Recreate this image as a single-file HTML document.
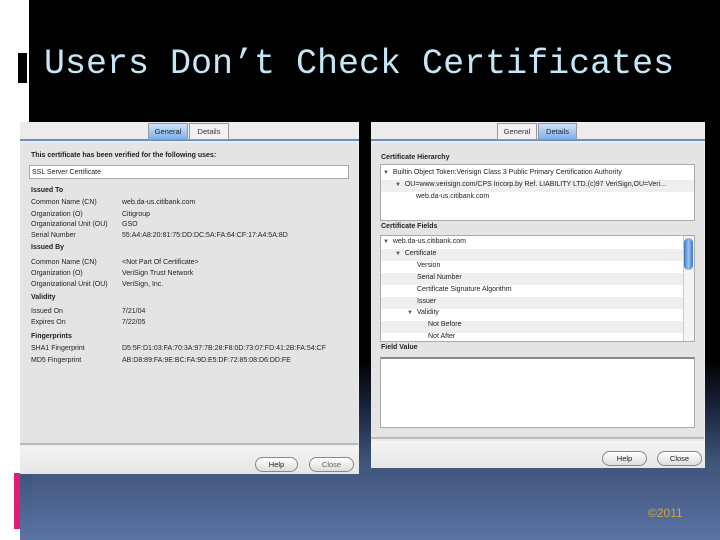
<!DOCTYPE html>
<html><head><meta charset="utf-8"><style>
*{margin:0;padding:0;box-sizing:border-box}
body{width:720px;height:540px;overflow:hidden;position:relative;background:#fff;font-family:"Liberation Sans",sans-serif}
.bg{position:absolute;left:29px;top:0;width:691px;height:540px;background:linear-gradient(to bottom,#000 0,#000 360px,#1a2640 410px,#3d5378 460px,#5a73a5 540px)}
.bg2{position:absolute;left:20px;top:470px;width:12px;height:70px;background:linear-gradient(to bottom,#3d5378,#5a73a5)}
.title{position:absolute;left:44px;top:44px;font-family:"Liberation Mono",monospace;font-size:35px;color:#c6e6f5;white-space:nowrap}
.mark{position:absolute;left:17px;top:52px;width:11px;height:32px;background:#000;border:1px solid #fff}
.pink{position:absolute;left:14px;top:473px;width:6px;height:56px;background:#e01c7a}
.copy{position:absolute;left:648px;top:506px;font-size:12px;color:#d9a23a}
.dlg{position:absolute;background:#ececec;font-size:7px;color:#222}
.tabbar{position:absolute;left:0;right:0;top:0;height:19px;background:#ececec;border-bottom:2px solid #6b8fc0}
.tab{position:absolute;top:1px;height:17px;font-size:7.5px;line-height:16px;text-align:center;border:1px solid #999;background:#f2f2f2;color:#333}
.tab.on{background:linear-gradient(#cfe2f8,#7fb0e8);color:#123}
.panel{position:absolute;background:#e4e4e4;border-bottom:2px solid #bbb}
.foot{position:absolute;left:0;right:0;bottom:0;background:linear-gradient(#f4f4f4,#e6e6e6)}
.btn{position:absolute;height:15px;border:1px solid #888;border-radius:8px;background:linear-gradient(#fff,#ddd);font-size:7.5px;line-height:13px;text-align:center;color:#222}
.t{position:absolute;white-space:nowrap;line-height:10px}
.b{font-weight:bold}
.box{position:absolute;background:#fff;border:1px solid #aaa}
.row{position:absolute;left:0;right:0;height:12px}
.row.g{background:#efefef}
.tri{font-size:6px;color:#555}
</style></head><body>
<div class="bg"></div><div class="bg2"></div>
<div class="mark"></div>
<div class="title">Users Don’t Check Certificates</div>
<div class="pink"></div>
<div class="copy">©2011</div>

<!-- left dialog -->
<div class="dlg" style="left:20px;top:122px;width:339px;height:352px">
 <div class="tabbar"></div>
 <div class="tab on" style="left:128px;width:40px">General</div>
 <div class="tab" style="left:169px;width:40px">Details</div>
 <div class="panel" style="left:0;top:21px;width:338px;height:302px"></div>
 <div class="t b" style="left:11px;top:29px">This certificate has been verified for the following uses:</div>
 <div class="box" style="left:9px;top:43px;width:320px;height:14px"></div>
 <div class="t" style="left:12px;top:46px">SSL Server Certificate</div>
 <div class="t b" style="left:11px;top:64px">Issued To</div>
 <div class="t" style="left:11px;top:76px">Common Name (CN)</div><div class="t" style="left:102px;top:76px">web.da-us.citibank.com</div>
 <div class="t" style="left:11px;top:88px">Organization (O)</div><div class="t" style="left:102px;top:88px">Citigroup</div>
 <div class="t" style="left:11px;top:98px">Organizational Unit (OU)</div><div class="t" style="left:102px;top:98px">GSO</div>
 <div class="t" style="left:11px;top:109px">Serial Number</div><div class="t" style="left:102px;top:109px">55:A4:A8:20:81:75:DD:DC:5A:FA:64:CF:17:A4:5A:8D</div>
 <div class="t b" style="left:11px;top:121px">Issued By</div>
 <div class="t" style="left:11px;top:136px">Common Name (CN)</div><div class="t" style="left:102px;top:136px">&lt;Not Part Of Certificate&gt;</div>
 <div class="t" style="left:11px;top:147px">Organization (O)</div><div class="t" style="left:102px;top:147px">VeriSign Trust Network</div>
 <div class="t" style="left:11px;top:158px">Organizational Unit (OU)</div><div class="t" style="left:102px;top:158px">VeriSign, Inc.</div>
 <div class="t b" style="left:11px;top:171px">Validity</div>
 <div class="t" style="left:11px;top:185px">Issued On</div><div class="t" style="left:102px;top:185px">7/21/04</div>
 <div class="t" style="left:11px;top:196px">Expires On</div><div class="t" style="left:102px;top:196px">7/22/05</div>
 <div class="t b" style="left:11px;top:210px">Fingerprints</div>
 <div class="t" style="left:11px;top:222px">SHA1 Fingerprint</div><div class="t" style="left:102px;top:222px">D5:5F:D1:03:FA:70:3A:97:7B:28:F8:0D:73:07:FD:41:2B:FA:54:CF</div>
 <div class="t" style="left:11px;top:234px">MD5 Fingerprint</div><div class="t" style="left:102px;top:234px">AB:D8:89:FA:9E:BC:FA:9D:E5:DF:72:85:08:D6:DD:FE</div>
 <div class="foot" style="height:28px"></div>
 <div class="btn" style="left:235px;top:335px;width:43px">Help</div>
 <div class="btn" style="left:289px;top:335px;width:45px;color:#666">Close</div>
</div>

<!-- right dialog -->
<div class="dlg" style="left:371px;top:122px;width:334px;height:346px">
 <div class="tabbar"></div>
 <div class="tab" style="left:126px;width:40px">General</div>
 <div class="tab on" style="left:167px;width:39px">Details</div>
 <div class="panel" style="left:0;top:21px;width:333px;height:296px"></div>
 <div class="t b" style="left:10px;top:31px">Certificate Hierarchy</div>
 <div class="box" style="left:9px;top:42px;width:315px;height:57px;overflow:hidden">
  <div class="row" style="top:3px"></div>
  <div class="row g" style="top:15px"></div>
  <div class="t" style="left:2px;top:3px"><span class="tri">▼</span> &nbsp;Builtin Object Token:Verisign Class 3 Public Primary Certification Authority</div>
  <div class="t" style="left:14px;top:15px"><span class="tri">▼</span> &nbsp;OU=www.verisign.com/CPS Incorp.by Ref. LIABILITY LTD.(c)97 VeriSign,OU=Veri...</div>
  <div class="t" style="left:35px;top:27px">web.da-us.citibank.com</div>
 </div>
 <div class="t b" style="left:10px;top:100px">Certificate Fields</div>
 <div class="box" style="left:9px;top:113px;width:315px;height:107px;overflow:hidden">
  <div class="row g" style="top:13px"></div><div class="row g" style="top:37px"></div><div class="row g" style="top:61px"></div><div class="row g" style="top:85px"></div>
  <div class="t" style="left:2px;top:1px"><span class="tri">▼</span> &nbsp;web.da-us.citibank.com</div>
  <div class="t" style="left:14px;top:13px"><span class="tri">▼</span> &nbsp;Certificate</div>
  <div class="t" style="left:36px;top:25px">Version</div>
  <div class="t" style="left:36px;top:37px">Serial Number</div>
  <div class="t" style="left:36px;top:49px">Certificate Signature Algorithm</div>
  <div class="t" style="left:36px;top:61px">Issuer</div>
  <div class="t" style="left:26px;top:72px"><span class="tri">▼</span> &nbsp;Validity</div>
  <div class="t" style="left:47px;top:84px">Not Before</div>
  <div class="t" style="left:47px;top:96px">Not After</div>
  <div style="position:absolute;right:0;top:0;width:11px;height:105px;background:#f4f4f4;border-left:1px solid #ccc"></div>
  <div style="position:absolute;right:1px;top:2px;width:9px;height:32px;border-radius:5px;background:linear-gradient(to right,#3a74c8,#9cc4f0,#3a74c8)"></div>
 </div>
 <div class="t b" style="left:10px;top:221px">Field Value</div>
 <div class="box" style="left:9px;top:235px;width:315px;height:71px;border-top:2px solid #888"></div>
 <div class="foot" style="height:27px"></div>
 <div class="btn" style="left:231px;top:329px;width:45px">Help</div>
 <div class="btn" style="left:286px;top:329px;width:45px">Close</div>
</div>
</body></html>
